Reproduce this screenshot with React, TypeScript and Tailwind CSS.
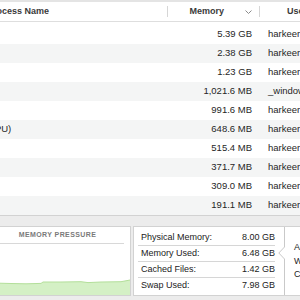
import React from "react"

type Proc = { name: string; mem: string; user: string }

const procs: Proc[] = [
  { name: "Docker", mem: "5.39 GB", user: "harkeerat" },
  { name: "Google Chrome", mem: "2.38 GB", user: "harkeerat" },
  { name: "Code Helper", mem: "1.23 GB", user: "harkeerat" },
  { name: "WindowServer", mem: "1,021.6 MB", user: "_windowserver" },
  { name: "Slack", mem: "991.6 MB", user: "harkeerat" },
  { name: "Google Chrome Helper (GPU)", mem: "648.6 MB", user: "harkeerat" },
  { name: "Finder", mem: "515.4 MB", user: "harkeerat" },
  { name: "Spotify", mem: "371.7 MB", user: "harkeerat" },
  { name: "Code Helper (Renderer)", mem: "309.0 MB", user: "harkeerat" },
  { name: "Mail", mem: "191.1 MB", user: "harkeerat" },
]

const stats = [
  { label: "Physical Memory:", value: "8.00 GB" },
  { label: "Memory Used:", value: "6.48 GB" },
  { label: "Cached Files:", value: "1.42 GB" },
  { label: "Swap Used:", value: "7.98 GB" },
]

function Chevron() {
  return (
    <svg width="7" height="4" viewBox="0 0 7 4" className="ml-[21px]">
      <polyline points="0.5,0.5 3.5,3.5 6.5,0.5" fill="none" stroke="#8a8a8a" strokeWidth="1" />
    </svg>
  )
}

function PressureChart() {
  return (
    <svg viewBox="0 0 139 50" preserveAspectRatio="none" className="w-full h-[50px] block">
      <path
        d="M0,50 L0,38 L20,38.5 L35,38.8 L50,38.4 L52,37 L70,37 L90,36.7 L97,37.6 L110,37 L130,36.7 L136,35.6 L139,35 L139,50 Z"
        fill="#d4f0c5"
      />
      <path
        d="M0,38 L20,38.5 L35,38.8 L50,38.4 L52,37 L70,37 L90,36.7 L97,37.6 L110,37 L130,36.7 L136,35.6 L139,35"
        fill="none"
        stroke="#b3df9a"
        strokeWidth="1"
      />
    </svg>
  )
}

export default function App() {
  return (
    <div className="w-[300px] h-[300px] overflow-hidden bg-white font-['Liberation_Sans',Arial,sans-serif] text-[#262626]">
      <div className="h-[2px] bg-[#e4e4e4]" />
      {/* column headers */}
      <div className="flex h-[20px] items-center border-b border-[#dedede] text-[9px] font-semibold text-[#3a3a3a]">
        <div className="w-[168px] shrink-0 flex items-center justify-between">
          <span className="ml-[-13px] whitespace-nowrap">Process Name</span>
          <div className="w-px h-[11px] bg-[#d6d6d6]" />
        </div>
        <div className="w-[92px] shrink-0 flex items-center justify-end">
          <span>Memory</span>
          <Chevron />
          <div className="ml-[7px] w-px h-[11px] bg-[#d6d6d6]" />
        </div>
        <div className="pl-[27px] whitespace-nowrap">User</div>
      </div>

      {/* rows */}
      <div className="pt-[3px] text-[9.5px]">
        {procs.map((p, i) => (
          <div key={p.mem} className={`flex h-[19px] items-center ${i % 2 === 1 ? "bg-[#f4f5f5]" : "bg-white"}`}>
            <div className="w-[168px] shrink-0">
              <span className="block ml-[-116px] whitespace-nowrap">{p.name}</span>
            </div>
            <div className="w-[92px] shrink-0 text-right pr-[8px] whitespace-nowrap">{p.mem}</div>
            <div className="pl-[8px] whitespace-nowrap">{p.user}</div>
          </div>
        ))}
      </div>

      {/* bottom panel */}
      <div className="border-t border-[#d2d2d2] bg-[#ececec] pt-[10px] pb-[4px] flex gap-[2px]">
        <div className="ml-[-10px] w-[141px] shrink-0 h-[70px] border border-[#d2d2d2] bg-white flex flex-col">
          <div className="mr-[6px] h-[17px] pt-[3px] leading-[10px] border-b border-[#d8d8d8] text-center text-[7px] font-semibold tracking-[0.4px] text-[#7a7a7a]">
            MEMORY PRESSURE
          </div>
          <div className="flex-1 flex items-end">
            <PressureChart />
          </div>
        </div>
        <div className="flex-1 h-[70px] border border-[#d2d2d2] bg-white flex text-[9px] text-[#222]">
          <div className="w-[141px] shrink-0 pl-[4px] pt-[3px]">
            {stats.map((s, i) => (
              <div
                key={s.label}
                className={`h-[16px] flex items-center justify-between pl-[3px] ${i < 3 ? "border-b border-[#d6d6d6]" : ""}`}
              >
                <span className="whitespace-nowrap">{s.label}</span>
                <span className="whitespace-nowrap">{s.value}</span>
              </div>
            ))}
          </div>
          <svg width="8" height="68" viewBox="0 0 8 68" className="ml-[3px] shrink-0">
            <polyline points="6.5,0 6.5,20 0.8,26 6.5,32 6.5,68" fill="none" stroke="#c9c9c9" strokeWidth="1" />
          </svg>
          <div className="pl-[8px] pt-[14px] leading-[13.5px] whitespace-nowrap">
            <div>App Memory:</div>
            <div>Wired Memory:</div>
            <div>Compressed:</div>
          </div>
        </div>
      </div>
    </div>
  )
}
